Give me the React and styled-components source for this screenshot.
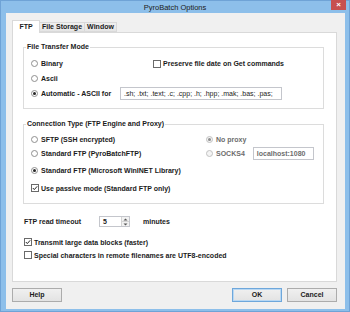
import React from "react"
import styled, { createGlobalStyle } from "styled-components"

const GlobalStyle = createGlobalStyle`
	html, body {
		margin: 0;
		padding: 0;
		background: #ffffff;
	}
	body {
		font-family: "Liberation Sans", Arial, sans-serif;
		color: #1b1b1b;
	}
`

const Window = styled.div`
	width: 350px;
	height: 312px;
	box-sizing: border-box;
	background: #8dbfea;
	box-shadow: inset 0 0 0 1px #6fa3d6;
	display: flex;
	flex-direction: column;
`

const TitleBar = styled.div`
	height: 13px;
	flex: none;
	display: grid;
	grid-template-columns: 1fr auto 1fr;
	align-items: start;
`

const Title = styled.div`
	grid-column: 2;
	font-size: 7.5px;
	line-height: 9px;
	padding-top: 3px;
	color: #202020;
`

const CloseButton = styled.div`
	grid-column: 3;
	justify-self: end;
	width: 15px;
	height: 10px;
	margin-right: 4px;
	background: #c75050;
	color: #ffffff;
	font-size: 8px;
	font-weight: bold;
	line-height: 10px;
	text-align: center;
`

const Client = styled.div`
	flex: 1;
	margin: 0 5px 3px 6px;
	background: #f0f0f0;
	padding: 7px 8px 7px 6px;
	display: flex;
	flex-direction: column;
`

const TabStrip = styled.div`
	height: 12px;
	display: flex;
	align-items: flex-end;
	padding-left: 1px;
`

const Tab = styled.div`
	position: relative;
	z-index: 1;
	box-sizing: border-box;
	width: ${p => p.$w}px;
	height: ${p => (p.$active ? 13 : 10)}px;
	margin-bottom: ${p => (p.$active ? -1 : 0)}px;
	border: 1px solid #d9d9d9;
	border-bottom: ${p => (p.$active ? "none" : "1px solid #d9d9d9")};
	margin-left: -1px;
	background: ${p => (p.$active ? "#ffffff" : "linear-gradient(#f0f0f0, #e5e5e5)")};
	font-size: 7px;
	font-weight: bold;
	line-height: ${p => (p.$active ? 11 : 8)}px;
	text-align: center;
`

const Panel = styled.div`
	height: 250px;
	box-sizing: border-box;
	border: 1px solid #d9d9d9;
	background: #ffffff;
	padding: 9px 12px 0 10px;
	display: flex;
	flex-direction: column;
`

const Group = styled.fieldset`
	margin: 0;
	margin-top: ${p => p.$top || 0}px;
	padding: 0;
	min-width: 0;
	border: 1px solid #dcdcdc;
`

const Legend = styled.legend`
	margin-left: 2px;
	padding: 0 1px;
	font-size: 7px;
	font-weight: bold;
	line-height: 10px;
`

const Rows = styled.div`
	padding: ${p => p.$pad};
`

const Row = styled.div`
	display: flex;
	align-items: center;
	height: ${p => p.$h}px;
	margin-top: ${p => p.$top || 0}px;
	margin-left: ${p => p.$left || 0}px;
`

const Label = styled.div`
	display: flex;
	align-items: center;
	gap: ${p => (p.$gap != null ? p.$gap : 3)}px;
	width: ${p => (p.$w ? `${p.$w}px` : "auto")};
	flex: none;
	font-size: 7px;
	font-weight: bold;
	white-space: nowrap;
	color: ${p => (p.$disabled ? "#6d6d6d" : "#1b1b1b")};
`

const RadioCircle = styled.span`
	width: 7px;
	height: 7px;
	box-sizing: border-box;
	border-radius: 50%;
	border: 1px solid ${p => (p.$disabled ? "#c2c2c2" : "#8f8f8f")};
	background: ${p => (p.$disabled ? "#f4f4f4" : "#ffffff")};
	display: flex;
	align-items: center;
	justify-content: center;
	flex: none;
`

const RadioDot = styled.span`
	width: 3px;
	height: 3px;
	border-radius: 50%;
	background: ${p => (p.$disabled ? "#8d8d8d" : "#262626")};
`

const TextBox = styled.div`
	box-sizing: border-box;
	width: ${p => p.$w}px;
	height: ${p => p.$h}px;
	border: 1px solid #c4c6cc;
	background: #ffffff;
	padding-left: 3px;
	font-size: 7px;
	font-weight: ${p => (p.$bold ? "bold" : "normal")};
	line-height: ${p => p.$h - 2}px;
	white-space: nowrap;
	overflow: hidden;
	color: ${p => (p.$disabled ? "#6d6d6d" : "#1b1b1b")};
	margin-left: ${p => p.$left || 0}px;
	display: flex;
	justify-content: space-between;
`

const Spin = styled.div`
	width: 7px;
	height: 100%;
	display: flex;
	flex-direction: column;
	border-left: 1px solid #d4d4d4;
	background: #f2f2f2;
`

const SpinHalf = styled.div`
	flex: 1;
	display: flex;
	align-items: center;
	justify-content: center;
	border-top: ${p => (p.$bottom ? "1px solid #d4d4d4" : "none")};
`

const Suffix = styled.div`
	margin-left: 13px;
	font-size: 7px;
	font-weight: bold;
`

const ButtonRow = styled.div`
	display: flex;
	margin-top: 6px;
	gap: 5px;
`

const Button = styled.div`
	width: 50px;
	height: 14px;
	box-sizing: border-box;
	border: 1px solid ${p => (p.$default ? "#6ea7db" : "#acacac")};
	box-shadow: ${p => (p.$default ? "inset 0 0 0 1px #b9d8f3" : "none")};
	background: linear-gradient(#f0f0f0, #e3e3e3);
	font-size: 7px;
	font-weight: bold;
	line-height: 12px;
	text-align: center;
	margin-left: ${p => (p.$push ? "auto" : "0")};
`

const Radio = ({ checked, disabled }) => (
	<RadioCircle $disabled={disabled}>
		{checked && <RadioDot $disabled={disabled} />}
	</RadioCircle>
)

const Check = ({ checked }) => (
	<svg width="8" height="8" viewBox="0 0 8 8">
		<rect x="0.5" y="0.5" width="7" height="7" fill="#ffffff" stroke="#6a6a6a" />
		{checked && <path d="M1.8 4 L3.3 5.6 L6.2 2.3" fill="none" stroke="#262626" strokeWidth="1" />}
	</svg>
)

const Arrow = ({ up }) => (
	<svg width="5" height="3" viewBox="0 0 5 3">
		<path d={up ? "M0.5 2.5 L2.5 0.5 L4.5 2.5Z" : "M0.5 0.5 L2.5 2.5 L4.5 0.5Z"} fill="#555" />
	</svg>
)

export default function App() {
	return (
		<Window>
			<GlobalStyle />
			<TitleBar>
				<Title>PyroBatch Options</Title>
				<CloseButton>×</CloseButton>
			</TitleBar>
			<Client>
				<TabStrip>
					<Tab $active $w={28}>FTP</Tab>
					<Tab $w={46}>File Storage</Tab>
					<Tab $w={33}>Window</Tab>
				</TabStrip>
				<Panel>
					<Group>
						<Legend>File Transfer Mode</Legend>
						<Rows $pad="4px 0 7px 7px">
							<Row $h={15}>
								<Label $w={122}><Radio />Binary</Label>
								<Label $gap={2}><Check />Preserve file date on Get commands</Label>
							</Row>
							<Row $h={15}>
								<Label><Radio />Ascii</Label>
							</Row>
							<Row $h={15}>
								<Label $w={89}><Radio checked />Automatic - ASCII for</Label>
								<TextBox $w={162} $h={13}>.sh; .txt; .text; .c; .cpp; .h; .hpp; .mak; .bas; .pas;</TextBox>
							</Row>
						</Rows>
					</Group>

					<Group $top={10}>
						<Legend>Connection Type (FTP Engine and Proxy)</Legend>
						<Rows $pad="3px 0 7px 7px">
							<Row $h={14}>
								<Label $w={175}><Radio />SFTP (SSH encrypted)</Label>
								<Label $disabled><Radio checked disabled />No proxy</Label>
							</Row>
							<Row $h={14}>
								<Label $w={175}><Radio />Standard FTP (PyroBatchFTP)</Label>
								<Label $disabled><Radio disabled />SOCKS4</Label>
								<TextBox $w={61} $h={13} $left={8} $bold $disabled>localhost:1080</TextBox>
							</Row>
							<Row $h={20}>
								<Label><Radio checked />Standard FTP (Microsoft WinINET Library)</Label>
							</Row>
							<Row $h={16}>
								<Label $gap={2}><Check checked />Use passive mode (Standard FTP only)</Label>
							</Row>
						</Rows>
					</Group>

					<Row $h={13} $top={11} $left={1}>
						<Label $w={75}>FTP read timeout</Label>
						<TextBox $w={31} $h={11} $bold>
							5
							<Spin>
								<SpinHalf><Arrow up /></SpinHalf>
								<SpinHalf $bottom><Arrow /></SpinHalf>
							</Spin>
						</TextBox>
						<Suffix>minutes</Suffix>
					</Row>
					<Row $h={12} $top={8} $left={1}>
						<Label $gap={2}><Check checked />Transmit large data blocks (faster)</Label>
					</Row>
					<Row $h={12} $top={1} $left={1}>
						<Label $gap={2}><Check />Special characters in remote filenames are UTF8-encoded</Label>
					</Row>
				</Panel>
				<ButtonRow>
					<Button>Help</Button>
					<Button $push $default>OK</Button>
					<Button>Cancel</Button>
				</ButtonRow>
			</Client>
		</Window>
	)
}
